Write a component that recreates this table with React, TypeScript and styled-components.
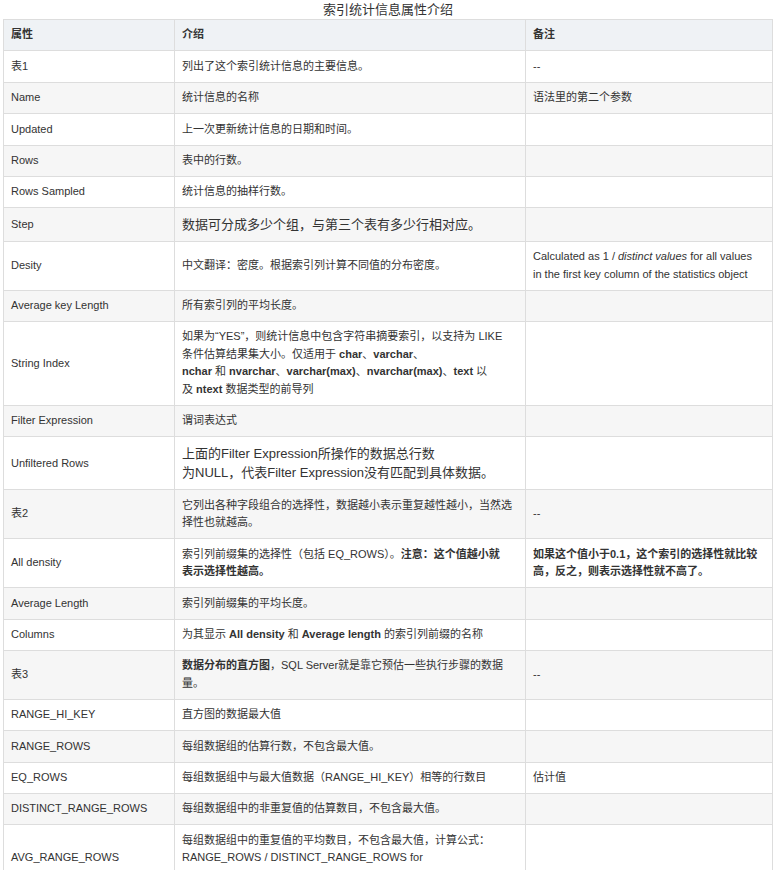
import React from 'react';
import styled, { createGlobalStyle } from 'styled-components';

const GlobalStyle = createGlobalStyle`
  html, body {
    margin: 0;
    padding: 0;
    background: #ffffff;
  }
  body {
    font-family: "Liberation Sans", Arial, "Noto Sans CJK SC", sans-serif;
    color: #333333;
  }
`;

const Page = styled.div`
  padding: 0 3px;
`;

const Table = styled.table`
  width: 769px;
  border-collapse: collapse;
  table-layout: fixed;
  font-size: 11px;
  line-height: 1.6;
  color: #333333;
`;

const Caption = styled.caption`
  font-size: 13px;
  line-height: 19px;
  color: #333333;
  text-align: center;
`;

const Row = styled.tr<{ $shade: 'head' | 'white' | 'gray' }>`
  background: ${(p) =>
    p.$shade === 'head' ? '#eff2f5' : p.$shade === 'gray' ? '#f6f6f6' : '#ffffff'};
`;

const HeadCell = styled.th`
  border: 1px solid #dddddd;
  padding: 6.4px 7px;
  text-align: left;
  font-weight: bold;
  vertical-align: middle;
`;

const Cell = styled.td`
  border: 1px solid #dddddd;
  padding: 6.4px 7px;
  vertical-align: middle;
  word-break: break-all;
`;

const Large = styled.span`
  display: block;
  font-size: 13px;
  line-height: 19.5px;
`;

type RowData = {
  label: string;
  desc: React.ReactNode;
  note?: React.ReactNode;
};

const rows: RowData[] = [
  { label: '表1', desc: '列出了这个索引统计信息的主要信息。', note: '--' },
  { label: 'Name', desc: '统计信息的名称', note: '语法里的第二个参数' },
  { label: 'Updated', desc: '上一次更新统计信息的日期和时间。' },
  { label: 'Rows', desc: '表中的行数。' },
  { label: 'Rows Sampled', desc: '统计信息的抽样行数。' },
  { label: 'Step', desc: <Large>数据可分成多少个组，与第三个表有多少行相对应。</Large> },
  {
    label: 'Desity',
    desc: '中文翻译：密度。根据索引列计算不同值的分布密度。',
    note: (
      <>
        Calculated as 1 / <i>distinct values</i> for all values
        <br />
        in the first key column of the statistics object
      </>
    ),
  },
  { label: 'Average key Length', desc: '所有索引列的平均长度。' },
  {
    label: 'String Index',
    desc: (
      <>
        如果为“YES”，则统计信息中包含字符串摘要索引，以支持为 LIKE
        <br />
        条件估算结果集大小。仅适用于 <b>char</b>、<b>varchar</b>、
        <br />
        <b>nchar</b> 和 <b>nvarchar</b>、<b>varchar(max)</b>、<b>nvarchar(max)</b>、<b>text</b> 以
        <br />
        及 <b>ntext</b> 数据类型的前导列
      </>
    ),
  },
  { label: 'Filter Expression', desc: '谓词表达式' },
  {
    label: 'Unfiltered Rows',
    desc: (
      <Large>
        上面的Filter Expression所操作的数据总行数
        <br />
        为NULL，代表Filter Expression没有匹配到具体数据。
      </Large>
    ),
  },
  {
    label: '表2',
    desc: (
      <>
        它列出各种字段组合的选择性，数据越小表示重复越性越小，当然选
        <br />
        择性也就越高。
      </>
    ),
    note: '--',
  },
  {
    label: 'All density',
    desc: (
      <>
        索引列前缀集的选择性（包括 EQ_ROWS）。<b>注意：这个值越小就</b>
        <br />
        <b>表示选择性越高。</b>
      </>
    ),
    note: (
      <b>
        如果这个值小于0.1，这个索引的选择性就比较
        <br />
        高，反之，则表示选择性就不高了。
      </b>
    ),
  },
  { label: 'Average Length', desc: '索引列前缀集的平均长度。' },
  {
    label: 'Columns',
    desc: (
      <>
        为其显示 <b>All density</b> 和 <b>Average length</b> 的索引列前缀的名称
      </>
    ),
  },
  {
    label: '表3',
    desc: (
      <>
        <b>数据分布的直方图</b>，SQL Server就是靠它预估一些执行步骤的数据
        <br />
        量。
      </>
    ),
    note: '--',
  },
  { label: 'RANGE_HI_KEY', desc: '直方图的数据最大值' },
  { label: 'RANGE_ROWS', desc: '每组数据组的估算行数，不包含最大值。' },
  {
    label: 'EQ_ROWS',
    desc: '每组数据组中与最大值数据（RANGE_HI_KEY）相等的行数目',
    note: '估计值',
  },
  { label: 'DISTINCT_RANGE_ROWS', desc: '每组数据组中的非重复值的估算数目，不包含最大值。' },
  {
    label: 'AVG_RANGE_ROWS',
    desc: (
      <>
        每组数据组中的重复值的平均数目，不包含最大值，计算公式：
        <br />
        RANGE_ROWS / DISTINCT_RANGE_ROWS for
        <br />
        DISTINCT_RANGE_ROWS &gt; 0。
      </>
    ),
  },
];

export default function App() {
  return (
    <Page>
      <GlobalStyle />
      <Table>
        <Caption>索引统计信息属性介绍</Caption>
        <colgroup>
          <col style={{ width: 171 }} />
          <col style={{ width: 351 }} />
          <col style={{ width: 247 }} />
        </colgroup>
        <thead>
          <Row $shade="head">
            <HeadCell>属性</HeadCell>
            <HeadCell>介绍</HeadCell>
            <HeadCell>备注</HeadCell>
          </Row>
        </thead>
        <tbody>
          {rows.map((r, i) => (
            <Row key={r.label} $shade={i % 2 === 0 ? 'white' : 'gray'}>
              <Cell>{r.label}</Cell>
              <Cell>{r.desc}</Cell>
              <Cell>{r.note}</Cell>
            </Row>
          ))}
        </tbody>
      </Table>
    </Page>
  );
}
